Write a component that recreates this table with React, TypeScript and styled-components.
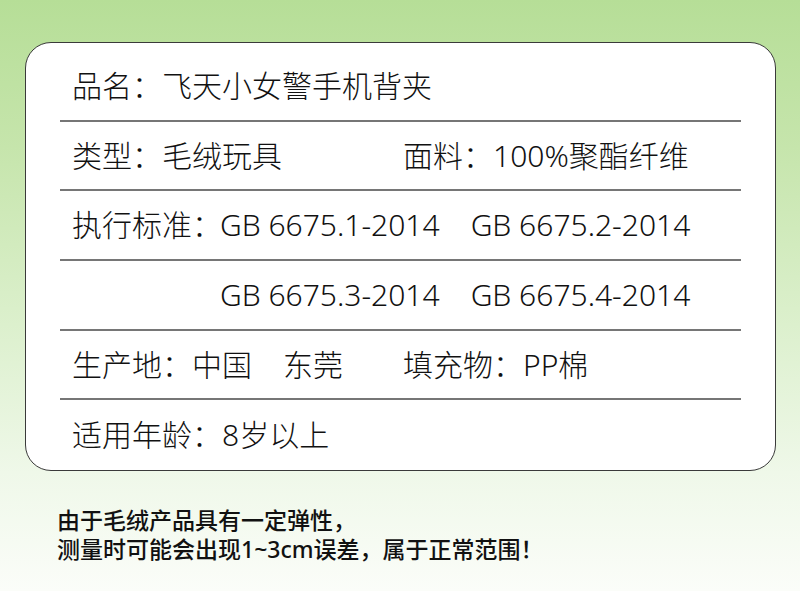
import styled, { createGlobalStyle } from "styled-components";

const GlobalStyle = createGlobalStyle`
  html, body {
    margin: 0;
    padding: 0;
  }
  body {
    font-family: "Noto Sans", "Noto Sans CJK SC", sans-serif;
    color: #111;
  }
`;

const Page = styled.div`
  width: 800px;
  height: 591px;
  box-sizing: border-box;
  padding: 42px 0 0 25px;
  background: linear-gradient(
    180deg,
    #b6de97 0%,
    #c6e5ac 25%,
    #dcf0cd 55%,
    #eff8e9 80%,
    #fbfdf9 100%
  );
  overflow: hidden;
`;

const Card = styled.div`
  width: 751px;
  height: 429px;
  box-sizing: border-box;
  background: #fff;
  border: 1.5px solid #3a3a3a;
  border-radius: 26px;
  padding: 0 34px;
  display: flex;
  flex-direction: column;
`;

const Row = styled.div<{ $first?: boolean; $last?: boolean }>`
  height: ${(p) => (p.$first ? 79 : 70)}px;
  box-sizing: border-box;
  padding: ${(p) => (p.$first ? "9px" : "0")} 0 0 12px;
  display: flex;
  align-items: center;
  border-bottom: ${(p) => (p.$last ? "none" : "2px solid #767676")};
  font-size: 30px;
  font-weight: 300;
  line-height: 1;
  white-space: nowrap;
`;

const Cell = styled.div<{ $width?: number }>`
  width: ${(p) => (p.$width ? `${p.$width}px` : "auto")};
  flex-shrink: 0;
`;

const Standards = styled.div`
  display: flex;
  gap: 31px;
`;

const Place = styled.span`
  margin-right: 31px;
`;

const Note = styled.div`
  margin: 35px 0 0 32px;
  font-size: 23px;
  font-weight: 500;
  line-height: 29px;
  color: #111;
`;

export default function App() {
  return (
    <Page>
      <GlobalStyle />
      <Card>
        <Row $first>品名：飞天小女警手机背夹</Row>
        <Row>
          <Cell $width={331}>类型：毛绒玩具</Cell>
          <Cell>面料：100%聚酯纤维</Cell>
        </Row>
        <Row>
          <Cell $width={148}>执行标准：</Cell>
          <Standards>
            <span>GB 6675.1-2014</span>
            <span>GB 6675.2-2014</span>
          </Standards>
        </Row>
        <Row>
          <Cell $width={148} />
          <Standards>
            <span>GB 6675.3-2014</span>
            <span>GB 6675.4-2014</span>
          </Standards>
        </Row>
        <Row>
          <Cell $width={331}>
            生产地：<Place>中国</Place>东莞
          </Cell>
          <Cell>填充物：PP棉</Cell>
        </Row>
        <Row $last>适用年龄：8岁以上</Row>
      </Card>
      <Note>
        由于毛绒产品具有一定弹性，
        <br />
        测量时可能会出现1~3cm误差，属于正常范围！
      </Note>
    </Page>
  );
}
